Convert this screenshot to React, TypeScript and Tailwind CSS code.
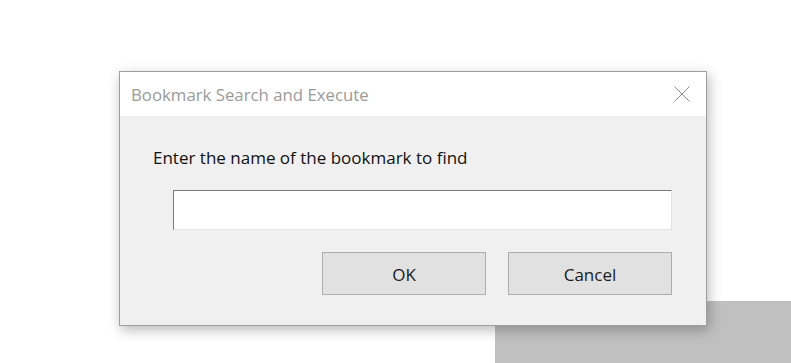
import React, {useState} from 'react';

const fontStack = '"Open Sans", "Noto Sans", "Liberation Sans", sans-serif';

const CloseIcon: React.FC = () => (
    <svg width="16" height="16" viewBox="0 0 16 16" className="block">
        <path d="M0.5 0.5 L15.5 15.5 M15.5 0.5 L0.5 15.5" stroke="#8c8c8c" strokeWidth="1" fill="none"/>
    </svg>
);

const DialogButton: React.FC<{label: string}> = ({label}) => (
    <button
        className="w-[164px] h-[43px] border border-[#adadad] bg-[#e1e1e1] text-[17px] text-[#1a1a1a] flex items-center justify-center pt-[2px]"
        style={{fontFamily: fontStack}}
    >
        {label}
    </button>
);

const App: React.FC = () => {
    const [query, setQuery] = useState('');

    return (
        <div className="relative w-[791px] h-[363px] bg-white overflow-hidden" style={{fontFamily: fontStack}}>
            {/* window sitting behind the dialog */}
            <div className="absolute left-[495px] top-[301px] right-0 bottom-0 bg-[#c0c0c0]"/>

            <div className="relative ml-[119px] pt-[71px]">
                <div className="w-[588px] h-[255px] border border-[#9e9e9e] bg-[#f0f0f0] shadow-[2px_4px_12px_rgba(0,0,0,0.28)] flex flex-col">
                    <div className="h-[44px] bg-white flex items-center justify-between pl-[11px] pr-[16px]">
                        <span className="text-[16.8px] text-[#9b9b9b] leading-none pt-[3px]">
                            Bookmark Search and Execute
                        </span>
                        <CloseIcon/>
                    </div>

                    <div className="flex-1 flex flex-col">
                        <div className="pl-[33px] pt-[32px] text-[17px] text-[#111] leading-[20px]">
                            Enter the name of the bookmark to find
                        </div>

                        <input
                            type="text"
                            value={query}
                            onChange={(e) => setQuery(e.target.value)}
                            className="ml-[53px] mt-[22px] w-[499px] h-[40px] bg-white outline-none border border-t-[#7a7a7a] border-l-[#7a7a7a] border-b-[#e3e3e3] border-r-[#e3e3e3] px-2"
                        />

                        <div className="mt-[22px] flex justify-end gap-[22px] pr-[34px]">
                            <DialogButton label="OK"/>
                            <DialogButton label="Cancel"/>
                        </div>
                    </div>
                </div>
            </div>
        </div>
    );
};

export default App;
